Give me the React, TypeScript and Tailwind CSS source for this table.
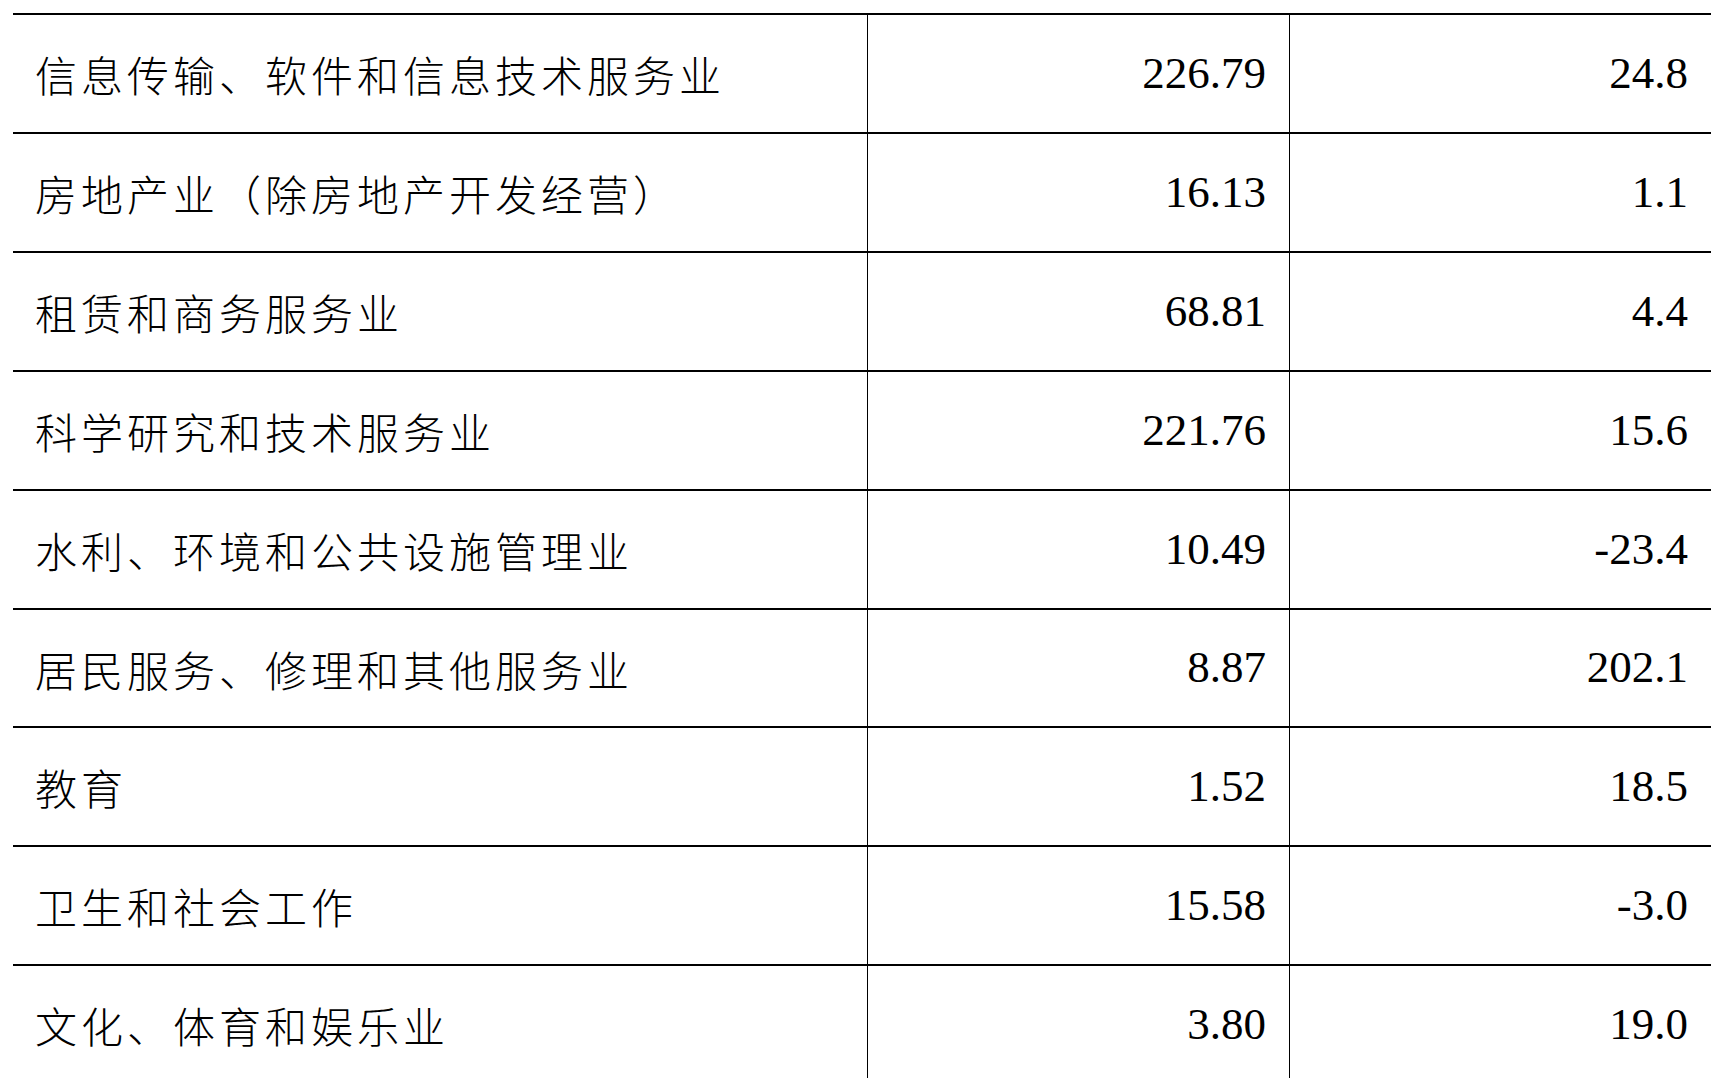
import React from "react";

const rows: [string, string, string][] = [
  ["信息传输、软件和信息技术服务业", "226.79", "24.8"],
  ["房地产业（除房地产开发经营）", "16.13", "1.1"],
  ["租赁和商务服务业", "68.81", "4.4"],
  ["科学研究和技术服务业", "221.76", "15.6"],
  ["水利、环境和公共设施管理业", "10.49", "-23.4"],
  ["居民服务、修理和其他服务业", "8.87", "202.1"],
  ["教育", "1.52", "18.5"],
  ["卫生和社会工作", "15.58", "-3.0"],
  ["文化、体育和娱乐业", "3.80", "19.0"],
];

export default function App() {
  return (
    <div className="w-[1714px] h-[1078px] overflow-hidden bg-white pt-[13px] pl-[13px]">
      <div className="w-[1698px]">
        {rows.map(([name, a, b], i) => (
          <div
            key={i}
            className={`grid grid-cols-[854px_422px_422px] border-t-2 border-black ${
              i === 5 ? "h-[118px]" : "h-[119px]"
            }`}
          >
            <div
              className="flex items-center pl-[22px] text-[42px] tracking-[4px] font-light text-black"
              style={{ fontFamily: '"Noto Sans CJK SC", sans-serif' }}
            >
              {name}
            </div>
            <div
              className="flex items-center justify-end pr-[23px] border-l border-black text-[45px] text-black"
              style={{ fontFamily: '"Liberation Serif", serif' }}
            >
              {a}
            </div>
            <div
              className="flex items-center justify-end pr-[23px] border-l border-black text-[45px] text-black"
              style={{ fontFamily: '"Liberation Serif", serif' }}
            >
              {b}
            </div>
          </div>
        ))}
      </div>
    </div>
  );
}
